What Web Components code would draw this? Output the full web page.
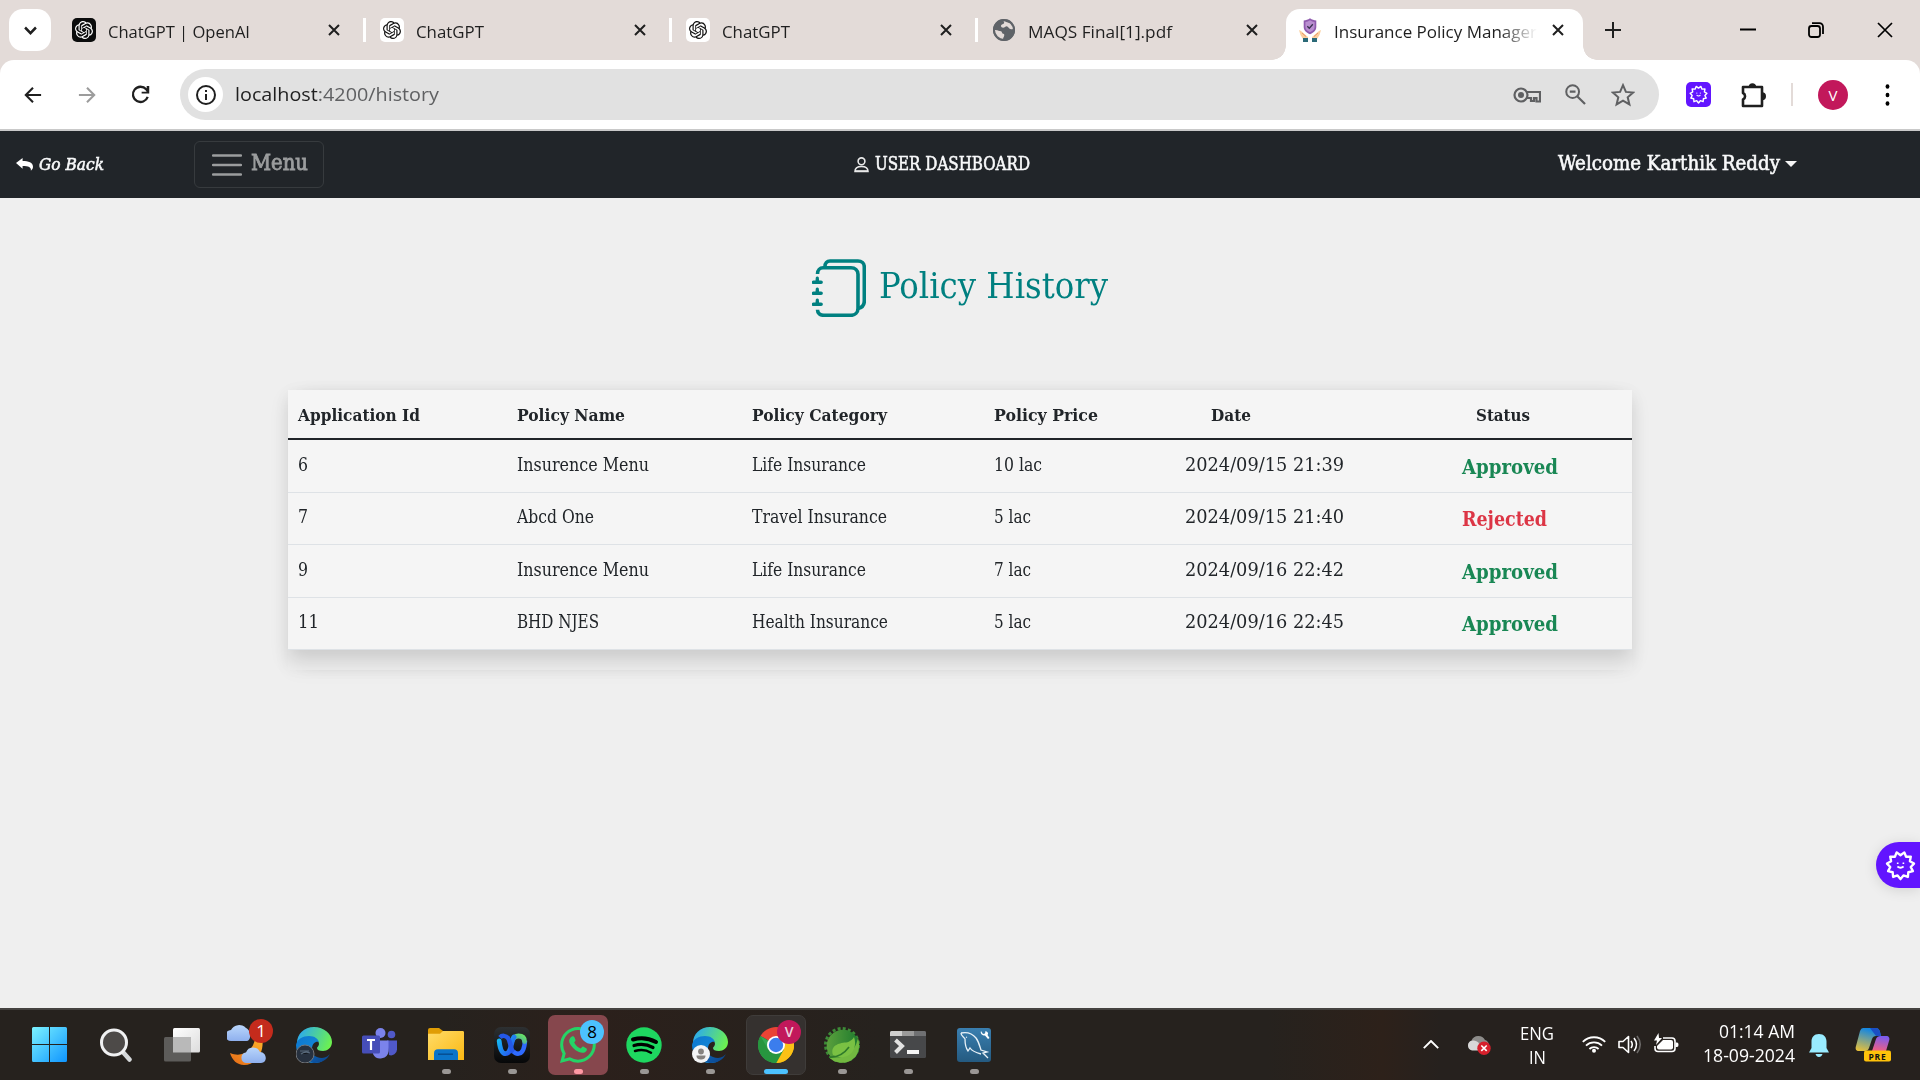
<!DOCTYPE html>
<html lang="en">
<head>
<meta charset="utf-8">
<title>Insurance Policy Management</title>
<style>
html,body{margin:0;height:100%;overflow:hidden;background:#efefef}
desktop-screen{font-family:"Open Sans","Noto Sans",sans-serif;color:#1f1f1f}
</style>
</head>
<body>
<desktop-screen></desktop-screen>
<script>
const define=(name,html,setup)=>customElements.define(name,class extends HTMLElement{
  connectedCallback(){
    if(this.shadowRoot)return;
    const root=this.attachShadow({mode:'open'});
    const t=document.createElement('template');
    t.innerHTML=typeof html==='function'?html(this):html;
    root.append(t.content.cloneNode(true));
    if(setup)setup(this,root);
  }
});

/* ---------- icons: [viewBox, markup] ---------- */
const OPENAI='M22.2819 9.8211a5.9847 5.9847 0 0 0-.5157-4.9108 6.0462 6.0462 0 0 0-6.5098-2.9A6.0651 6.0651 0 0 0 4.9807 4.1818a5.9847 5.9847 0 0 0-3.9977 2.9 6.0462 6.0462 0 0 0 .7427 7.0966 5.98 5.98 0 0 0 .511 4.9107 6.051 6.051 0 0 0 6.5146 2.9001A5.9847 5.9847 0 0 0 13.2599 24a6.0557 6.0557 0 0 0 5.7718-4.2058 5.9894 5.9894 0 0 0 3.9977-2.9001 6.0557 6.0557 0 0 0-.7475-7.0729zm-9.022 12.6081a4.4755 4.4755 0 0 1-2.8764-1.0408l.1419-.0804 4.7783-2.7582a.7948.7948 0 0 0 .3927-.6813v-6.7369l2.02 1.1686a.071.071 0 0 1 .038.052v5.5826a4.504 4.504 0 0 1-4.4945 4.4944zm-9.6607-4.1254a4.4708 4.4708 0 0 1-.5346-3.0137l.142.0852 4.783 2.7582a.7712.7712 0 0 0 .7806 0l5.8428-3.3685v2.3324a.0804.0804 0 0 1-.0332.0615L9.74 19.9502a4.4992 4.4992 0 0 1-6.1408-1.6464zM2.3408 7.8956a4.485 4.485 0 0 1 2.3655-1.9728V11.6a.7664.7664 0 0 0 .3879.6765l5.8144 3.3543-2.0201 1.1685a.0757.0757 0 0 1-.071 0l-4.8303-2.7865A4.504 4.504 0 0 1 2.3408 7.872zm16.5963 3.8558L13.1038 8.364 15.1192 7.2a.0757.0757 0 0 1 .071 0l4.8303 2.7913a4.4944 4.4944 0 0 1-.6765 8.1042v-5.6772a.79.79 0 0 0-.407-.667zm2.0107-3.0231l-.142-.0852-4.7735-2.7818a.7759.7759 0 0 0-.7854 0L9.409 9.2297V6.8974a.0662.0662 0 0 1 .0284-.0615l4.8303-2.7866a4.4992 4.4992 0 0 1 6.6802 4.66zM8.3065 12.863l-2.02-1.1638a.0804.0804 0 0 1-.038-.0567V6.0742a4.4992 4.4992 0 0 1 7.3757-3.4537l-.142.0805L8.704 5.459a.7948.7948 0 0 0-.3927.6813zm1.0976-2.3654l2.602-1.4998 2.6069 1.4998v2.9994l-2.5974 1.4997-2.6067-1.4997Z';
const line=(d,w=2,c='currentColor',x='')=>`<path d="${d}" fill="none" stroke="${c}" stroke-width="${w}" ${x}/>`;
const grad=(id,a,b,x='x1="0" y1="0" x2="1" y2="1"')=>`<linearGradient id="${id}" ${x}><stop offset="0" stop-color="${a}"/><stop offset="1" stop-color="${b}"/></linearGradient>`;
/* scalloped gear outline with a smiling face */
const gear=(()=>{let p='';const n=11;for(let i=0;i<n*2;i++){const a=Math.PI*i/n+Math.PI/2,r=i%2?10:13.2;p+=(i?'L':'M')+(15+r*Math.cos(a)).toFixed(2)+' '+(15+r*Math.sin(a)).toFixed(2);}return p+'Z';})();
const face=w=>line(gear,w,'#fff','stroke-linejoin="round"')+`<path d="M11.500 12.800h1.600M17 12.800h1.600" stroke="#fff" stroke-width="1.500"/>`+line('M12 16q3 2.400 6 0',1.700,'#fff');
const edge=`<defs>${grad('a','#2aa8f2','#6df24e','x1="0" y1=".3" x2="1" y2=".6"')}${grad('b','#0d76cf','#1592dc')}${grad('c','#0e6fc4','#0b3f86')}</defs>
<path d="M1 16C1 7 8 0 18 0c10 0 18 7 18 15 0 6-5 9-9 9-4 0-6-1-6-3 0-1 2-2 2-4 0-3-3-6-7-6-6 0-12 2-15 8z" fill="url(#a)"/>
<path d="M0 18C1 12 7 9 13 9c6 0 9 3 10 6-3-1-7 1-7 7 0 8 6 11 10 12-3 2-7 2-8 2C8 36 0 28 0 18z" fill="url(#b)"/>
<path d="M15 19c-2 7 4 12 11 12 4 0 7-3 8-4-3 6-9 9-15 9-8 0-11-9-4-17z" fill="url(#c)"/>`;
const ICONS={
 openaiDark:['0 0 24 24',`<rect width="24" height="24" rx="5" fill="#0b0c0c"/><g transform="translate(3 3) scale(.75)"><path fill="#fff" d="${OPENAI}"/></g>`],
 openai:['0 0 24 24',`<rect width="24" height="24" rx="5" fill="#fff"/><g transform="translate(3 3) scale(.75)"><path fill="#111" d="${OPENAI}"/></g>`],
 globe:['0 0 24 24',`<circle cx="12" cy="12" r="11" fill="#5f6368"/><path d="M3 12c3 0 3 1 5 1 3 0 1 3 4 3 1 2-1 3-1 6-5 0-9-5-8-10zM9 2.500c2-1 4-1 6-.500-1 2-3 1-3 3 0 1.500-3 1-3 3s3 2 4 1 2-1 3 0 2 3 5 2c1.500-.500 1-4 0-5" fill="#e3dbd8"/><circle cx="12" cy="12" r="10" fill="none" stroke="#5f6368" stroke-width="2"/>`],
 shield:['0 0 24 24',`<path d="M12 .3c2 1.500 4 2 6.300 2.200v6.500c0 3.500-3 5.800-6.300 7.200-3.300-1.400-6.300-3.700-6.300-7.200V2.500C8 2.300 10 1.800 12 .3z" fill="#8f5aae"/><path d="M12 2.300c1.500 1 3 1.500 4.600 1.700v5c0 2.600-2.200 4.200-4.600 5.300-2.400-1.100-4.600-2.700-4.600-5.300V4c1.600-.2 3.100-.7 4.600-1.700z" fill="#b98ed0"/>${line('M9.300 8.300l2 2 3.500-4',1.300,'#37324f')}<path d="M1 12l2 1 4 3.500 3 2.500V21H5L2.500 17zM23 12l-2 1-4 3.500-3 2.500v2h5l2.500-4z" fill="#fbcf9e"/><path d="M4 15l4 3.500M20 15l-4 3.500" stroke="#e9966a" stroke-width="1"/><path d="M5 20h5v4H5zM14 20h5v4h-5z" fill="#2b6a78"/>`],
 x:['0 0 12 12',line('M1 1l10 10M11 1L1 11',2)],
 winx:['0 0 16 16',line('M1 1l14 14M15 1L1 15',1.7,'#000')],
 min:['0 0 16 16',line('M0 7.500h16',2,'#000')],
 restore:['0 0 16 16',`<rect x="1" y="4" width="11" height="11" rx="2.500" fill="none" stroke="#000" stroke-width="1.800"/>`+line('M4 1.200h7.500a3.500 3.500 0 0 1 3.500 3.500V12',1.800,'#000')],
 plus:['0 0 16 16',line('M8 0v16M0 8h16',2)],
 down:['0 0 12 8',line('M1 1.300l5 5 5-5',2.300)],
 back:['0 0 20 20',line('M19 10H3M10 2l-8 8 8 8',2.300)],
 fwd:['0 0 20 20',line('M1 10h16M10 2l8 8-8 8',2.300)],
 reload:['0 0 20 20',line('M17.600 12.500A8 8 0 1 1 16 4.500l2 2.500',2.400)+'<path d="M19.200 1v8h-8V7h5.300V1z" fill="currentColor"/>'],
 info:['0 0 20 20','<circle cx="10" cy="10" r="9" fill="none" stroke="currentColor" stroke-width="2"/><path d="M9 9h2v6H9zM9 5h2v2H9z" fill="currentColor"/>'],
 key:['0 0 28 16',`<circle cx="8" cy="8" r="6.500" fill="none" stroke="currentColor" stroke-width="2.200"/><circle cx="8" cy="8" r="3" fill="currentColor"/>`+line('M13.500 5H27v9.500h-3.500V11h-2.500v3h-3v-3h-4',2.200)],
 zoomout:['0 0 22 22',`<circle cx="8" cy="8" r="6.700" fill="none" stroke="currentColor" stroke-width="2.100"/>`+line('M13 13l8 8M5 8h6',2.300)],
 star:['0 0 24 24',line('M12 2.200l2.900 6.700 7.300.6-5.500 4.800 1.700 7.100L12 17.600l-6.400 3.800 1.700-7.100L1.800 9.500l7.300-.6z',2)],
 ext:['0 0 30 30',`<rect width="30" height="30" rx="6" fill="#6215ff"/><g transform="translate(3.500 3.500) scale(.77)">${face(2.2)}</g>`],
 puzzle:['0 0 26 26','<path d="M3 5h19v19H3v-6.500a3.600 3.600 0 0 0 0-6.500z" fill="none" stroke="#1f1f1f" stroke-width="2.600" stroke-linejoin="round"/><path d="M9.500 5a3 3 0 0 1 6 0zM22 11a3.200 3.200 0 0 1 0 6.500z" fill="#1f1f1f" stroke="#1f1f1f" stroke-width="1.500"/>'],
 dots:['0 0 6 22','<circle cx="3" cy="2.500" r="2.300"/><circle cx="3" cy="11" r="2.300"/><circle cx="3" cy="19.500" r="2.300"/>'],
 reply:['0 0 16 14','<path d="M0 5.500L6.200 0v3.200c5.500 0 9.800 1.500 9.800 6.200 0 1.700-.8 3.200-2 4.200.5-3.600-2.200-5-7.800-5v2.900z" fill="#fff"/>'],
 burger:['0 0 30 22',line('M1 1.500h28M1 11h28M1 20.500h28',2.300,'#9b9d9e','stroke-linecap="round"')],
 user:['0 0 15 16','<circle cx="7.500" cy="4.300" r="3.400" fill="none" stroke="#e8e8e8" stroke-width="1.600"/><path d="M1 14.500c0-3.500 2-5 6.500-5s6.500 1.500 6.500 5z" fill="none" stroke="#e8e8e8" stroke-width="1.600"/><path d="M1 13.200h13v1.500H1z" fill="#e8e8e8"/>'],
 caret:['0 0 11 6','<path d="M0 0h11L5.500 6z" fill="#f5f5f5"/>'],
 book:['0 0 54 58',line('M13 7.500C13 4 15 2 18 2h28c3.500 0 6.300 2.500 6.300 6v34c0 4-2 6.500-6.300 7.500',3.600,'#008080')+line('M5.500 15C5.500 11 8 8.800 11 8.800h28c4 0 7 2.500 7 6.500v34c0 4-3 7-7 7H12c-4 0-6.500-2-6.500-5.500',3.600,'#008080')+'<g fill="#008080"><path id="r" d="M1.500 21.500h2l.3-3a1.700 1.700 0 0 1 3 0l.3 3h2a1.600 1.600 0 0 1 0 3.600h-7.600a1.800 1.800 0 0 1 0-3.600z"/><use href="#r" y="11"/><use href="#r" y="22"/></g>'],
 gear:['0 0 30 30',face(2.3)],
 windows:['0 0 35 35',`<defs>${grad('w','#7cf3ff','#0f95ff').replace('<linearGradient','<linearGradient gradientUnits="userSpaceOnUse"').replace('x2="1" y2="1"','x2="35" y2="35"')}</defs><path fill="url(#w)" d="M0 1.500Q0 0 1.500 0H17v17H0zM18 0h15.500Q35 0 35 1.500V17H18zM0 18h17v17H1.500Q0 35 0 33.500zM18 18h17v15.500q0 1.500-1.500 1.500H18z"/>`],
 search:['0 0 32 34','<path d="M22 23l7.500 8.500" stroke="#d5d8da" stroke-width="4.500" stroke-linecap="round"/><circle cx="14" cy="14.500" r="12.500" fill="#4d4a48" stroke="#f0f1f2" stroke-width="3"/>'],
 taskview:['0 0 36 34',`<defs>${grad('t','#fff','#dcdcdc')}</defs><rect x="9" width="27" height="24.500" rx="1.500" fill="url(#t)"/><rect y="9" width="27" height="24.500" rx="1.500" fill="#5d5c5a"/><path d="M9 9h18v15.500H9z" fill="#b9b9b9"/>`],
 weather:['0 0 42 44',`<defs>${grad('o','#ffb52b','#e56a17','x1="1" y1="0" x2="0" y2="1"')}${grad('k','#b9d6fb','#8fb0ee','x1="0" y1="0" x2="0" y2="1"')}</defs><path d="M35 14C38 28 30 42 17 42 10 42 5 37 3 30c12 5 23-2 25-14z" fill="url(#o)"/><path d="M5 20a5.500 5.500 0 0 1 0-11 9 8.500 0 0 1 15-2c5 2 6 13 0 13z" transform="translate(-1 -2)" fill="url(#k)"/><path d="M19 40a5.300 5.300 0 0 1 0-10.500 7.500 7.500 0 0 1 14-.5c7 0 8 11 1 11z" fill="url(#k)"/>`],
 edge:['0 0 36 36',edge+'<circle cx="9" cy="27" r="9" fill="#27313f" stroke="#73767b" stroke-width="1"/><path d="M4 24h9M5 27q4-3 9-1" stroke="#596a7c" stroke-width="1.200"/>'],
 edgeUser:['0 0 36 36',edge+'<circle cx="9" cy="27" r="9" fill="#f3f4f5"/><circle cx="9" cy="24.500" r="2.900" fill="#85827f"/><path d="M4.500 28.500h9c0 3-2 4-4.500 4s-4.500-1-4.500-4z" fill="#85827f"/>'],
 teams:['0 0 36 33','<circle cx="18.500" cy="5" r="5" fill="#7b83eb"/><circle cx="29.500" cy="6.500" r="3.800" fill="#5059c9"/><path d="M25 12.500h10v9a6 6 0 0 1-8 5.500z" fill="#5059c9"/><path d="M11 12.500h15.500V23a8.200 8.200 0 0 1-15.500 3z" fill="#7b83eb"/><rect y="7.500" width="18" height="18" rx="1.500" fill="#464eb8"/><path d="M5 12h8M9 12v10" stroke="#fff" stroke-width="2.200"/>'],
 files:['0 0 36 34',`<defs>${grad('f','#ffdc69','#fbb812')}</defs><path d="M0 2q0-2 2-2h9l4 3v4H0z" fill="#e09d05"/><path d="M0 6h12l3-3h19.500Q36 3 36 4.500V33H0z" fill="url(#f)"/><path d="M6 33v-7q0-4 4-4h16q4 0 4 4v7z" fill="#0b74c9"/><path d="M10 27h15" stroke="#064f94" stroke-width="1.600"/>`],
 webex:['0 0 36 36',`<defs>${grad('x','#11c6f4','#2a4cf0','gradientUnits="userSpaceOnUse" x1="3" y1="10" x2="22" y2="24"')}${grad('y','#2456f5','#65e069','gradientUnits="userSpaceOnUse" x1="20" y1="26" x2="30" y2="9"')}${grad('z','#2d3032','#060708','x1="0" y1="0" x2="0" y2="1"')}</defs><rect width="36" height="36" rx="7" fill="url(#z)"/><path d="M19 24c1.500 2 3 2.700 5 2.700 4 0 6.500-5 7-13" fill="none" stroke="#2f6bff" stroke-width="4.500"/><path d="M18 14c1.500-4 4-5 6.500-5 4 0 6 2 6 5.500" fill="none" stroke="url(#y)" stroke-width="4.800" stroke-linecap="round"/><path d="M5.200 14c.8 8 2.800 12.700 6.500 12.700C17.500 26.700 17 14 20 10" fill="none" stroke="url(#x)" stroke-width="4.800" stroke-linecap="round"/><path d="M6 10.500c2-2.500 6-2 8 .5 3 4 2 11 5.500 14" fill="none" stroke="#2458e8" stroke-width="4.500"/>`],
 whatsapp:['0 0 16 16','<path fill="#25d366" d="M13.601 2.326A7.850 7.850 0 0 0 7.994 0C3.627 0 .068 3.558.064 7.926c0 1.399.366 2.760 1.057 3.965L0 16l4.204-1.102a7.900 7.900 0 0 0 3.790.965h.004c4.368 0 7.926-3.558 7.930-7.930A7.900 7.900 0 0 0 13.600 2.326zM7.994 14.521a6.600 6.600 0 0 1-3.356-.920l-.240-.144-2.494.654.666-2.433-.156-.251a6.560 6.560 0 0 1-1.007-3.505c0-3.626 2.957-6.584 6.591-6.584a6.560 6.560 0 0 1 4.660 1.931 6.560 6.560 0 0 1 1.928 4.660c-.004 3.639-2.961 6.592-6.592 6.592"/><path fill="#25d366" d="M5.300 4.200c.5-.3.900-.1 1.100.4l.5 1.200c.1.400-.4.800-.6 1.100.7 1.300 1.600 2.100 2.900 2.700.4-.4.700-1 1.100-.9l1.500.8c.3.200.1.900-.2 1.300-.8.900-2 .8-3.200.3C6.300 10.200 4.800 8.500 4.200 7c-.4-1.200.2-2.300 1.100-2.800z"/>'],
 spotify:['0 0 36 36','<circle cx="18" cy="18" r="17.700" fill="#1ed760"/>'+line('M7 12.500q12-3.500 23 2.500',4,'#000','stroke-linecap="round"')+line('M8 18.500q10-3 19 2',3.200,'#000','stroke-linecap="round"')+line('M9 24q9-2.500 16 1.700',2.500,'#000','stroke-linecap="round"')],
 chrome:['0 0 36 36','<path d="M18 18L2.500 9A18 18 0 0 1 33.600 9z" fill="#ea4335"/><path d="M18 18L33.600 9A18 18 0 0 1 18 36z" fill="#fbbc04"/><path d="M18 18v18A18 18 0 0 1 2.500 9z" fill="#34a853"/><path d="M18 9h15.600A18 18 0 0 1 18.300 36l7.500-13.500z" fill="#fbc116"/><path d="M10.200 22.500L2.500 9A18 18 0 0 0 18.300 36l7.500-13.500z" fill="#27963f"/><circle cx="18" cy="18" r="9" fill="#fff"/><circle cx="18" cy="18" r="7.200" fill="#3b7ded"/>'],
 spring:['0 0 36 36',`<defs>${grad('s','#5aa03c','#1e7a2e','x1="0" y1="0" x2="1" y2="0"')}</defs><circle cx="18" cy="18" r="16.500" fill="none" stroke="#3d8b37" stroke-width="3" stroke-dasharray="3 2.200"/><circle cx="19" cy="19" r="16.300" fill="url(#s)"/><path d="M34 11c3 10 0 22-13 24.500C14 36.500 8 34 5 30c12 2 20-1 25-9 2-3 3-6 4-10z" fill="#72b840"/><path d="M9 28C6 19 14 16 22 15.500c4-.5 7-3.500 8-5.500 3 8 0 18-10 20-4 .8-8-.5-11-2z" fill="#7ac143"/><path d="M5 30q12 1 20-10" fill="none" stroke="#2f7a2a" stroke-width="1.600"/>`],
 terminal:['0 0 36 27','<rect width="36" height="27" rx="1.500" fill="#47484a"/><path d="M0 1.500Q0 0 1.500 0H12v5H0z" fill="#cfcfcf"/><path d="M12 0h12v5H12z" fill="#9a9a9a"/><path d="M24 0h10.500Q36 0 36 1.500V5H24z" fill="#6f7072"/><path d="M5.500 9l6.500 6-6.500 6.500" fill="none" stroke="#e2e2e2" stroke-width="4"/><path d="M17 19h12v4H17z" fill="#f5f5f5"/>'],
 mysql:['0 0 34 34',`<defs>${grad('m','#3a7fb0','#245a80','x1="0" y1="0" x2="0" y2="1"')}</defs><rect width="34" height="34" rx="3" fill="url(#m)"/>`+line('M4 5c5-1 11 0 15 5 3 4 4 9 5 12l6 2-4 1 5 5M4 5c0 3 3 4 4 6 0 4 0 8 3 12l2-3c2 3 7 5 11 6M9 9l1 .5',1.300,'#e8f1f7')+'<path d="M24 3l2 3 2-.5.500-2.500c3 1 3 3 2 4l2 3-1.500 1-3-3.500c-3 0-5-2-4-4.500z" fill="#fff"/>'],
 up:['0 0 16 9',line('M.8 8.200L8 1l7.200 7.200',1.900,'#fff')],
 cloud:['0 0 24 20','<path d="M5 15a5 5 0 0 1-.5-9.500A7.500 7.500 0 0 1 18 5c4 1 5 6 3 10z" fill="#8d8c8a"/><path d="M5 15.500a5 5 0 0 1 0-9.800c5-1 8 3 13 9.800z" fill="#d8d8d8"/><circle cx="17" cy="13.200" r="6.700" fill="#d6202c"/>'+line('M14.300 10.500l5.400 5.400M19.700 10.500l-5.400 5.400',1.600,'#fff')],
 wifi:['0 0 24 18',line('M.8 6.800a16 16 0 0 1 22.400 0M4 10.600a11.500 11.500 0 0 1 16 0M7.400 14a6.500 6.500 0 0 1 9.200 0',1.800,'#fff')+'<circle cx="12" cy="15.800" r="2" fill="#fff"/>'],
 volume:['0 0 24 19',line('M1 6.500h4l5.500-5v16L5 12.500H1z',1.600,'#fff','stroke-linejoin="round"')+line('M13 6q2.500 3.500 0 7M16 3q5 6.500 0 13',1.600,'#fff')+line('M19 1q6.500 8.500 0 17',1.600,'#6c6968')],
 battery:['0 0 25 20','<path d="M9 5h9a3 3 0 0 1 3 3v7.500a3 3 0 0 1-3 3H4a3 3 0 0 1-3-3V13" fill="none" stroke="#fff" stroke-width="1.600"/><path d="M9 7h8a2 2 0 0 1 2 2v5.500a2 2 0 0 1-2 2H5q-2 0-2-2V13z" fill="#fff"/><path d="M21.500 9.500h1.500q1.500 0 1.500 2.200T23 14h-1.500z" fill="#fff"/><path d="M4.500 0L0 7.500h3L2 12l6-7H5z" fill="#fff"/>'],
 bell:['0 0 20 23','<path d="M10 0c5 0 7.500 3.500 7.500 7.500V14l2.500 4.500H0L2.500 14V7.500C2.500 3.500 5 0 10 0zM6.500 20h7q-1 3-3.500 3t-3.500-3z" fill="#99ebff"/>'],
 copilot:['0 0 36 35',`<defs>${grad('p','#1687e0','#f2c331','x1=".3" y1="0" x2="0" y2="1"')}${grad('q','#7a5cf0','#f2607f','x1=".5" y1="0" x2=".3" y2="1"')}</defs><path d="M8 1h13q3 0 4 4l1 4h-5q-3 0-4 3l-3 9q-1 3-4 3H4c-3 0-4-2-3-5L5 4q1-3 3-3z" fill="url(#p)"/><path d="M15 1h6q3 0 4 4l1 4h-5z" fill="#1b4fc4"/><path d="M26 9h5c3 0 4 2 3 5l-3 10H17l4-12q1-3 5-3z" fill="url(#q)"/><rect x="9" y="23.500" width="27" height="11" rx="2" fill="#ffc20a"/>`]
};
define('ui-icon',el=>{const [vb,m]=ICONS[el.getAttribute('name')];const w=el.getAttribute('w'),h=el.getAttribute('h')||w;
 return `<style>:host{display:block;flex:none;width:${w}px;height:${h}px}svg{display:block}</style><svg width="${w}" height="${h}" viewBox="${vb}" preserveAspectRatio="none">${m}</svg>`;});

/* single-line text set to an exact advance width */
define('fit-text',`<style>:host{display:block;flex:none;white-space:nowrap;line-height:1.3}span{display:inline-block;transform-origin:0 50%}</style><span><slot></slot></span>`,(el,root)=>{
  const w=+el.getAttribute('w'),s=root.querySelector('span');
  el.style.width=w+'px';
  s.style.transform=`scaleX(${w/s.getBoundingClientRect().width})`;
});

define('browser-tab',el=>`<style>
:host{display:flex;align-items:center;height:44px;flex:none;box-sizing:border-box;width:306px;padding:0 0 0 14px;font-size:17px;border-right:3px solid transparent}
:host([first]){padding-left:12px}
.clip{flex:1;margin-left:12px;overflow:hidden;padding-top:4px}
ui-icon.c{margin-right:23px}
.sep{width:3px;height:24px;background:#fff;flex:none;margin-right:-3px}
:host([last]) .sep{background:none}
:host([active]){width:297px;height:51px;background:#fff;border:0;border-radius:14px 14px 0 0;padding:0 0 9px 12px;margin:9px 0 0 2px;align-self:flex-start;position:relative}
:host([active]) .sep{display:none}
:host([active]) .c{margin-right:19px}
:host([active]) .clip{-webkit-mask:linear-gradient(90deg,#000 165px,transparent 203px);flex:0 0 204px;margin-right:auto}
.l,.r{display:none;position:absolute;bottom:0;width:14px;height:14px}
:host([active]) .l{display:block;left:-14px;background:radial-gradient(circle at 0 0,transparent 13.5px,#fff 14px)}
:host([active]) .r{display:block;right:-14px;background:radial-gradient(circle at 100% 0,transparent 13.5px,#fff 14px)}
</style><i class="l"></i><i class="r"></i><ui-icon name="${el.getAttribute('icon')}" w="24"></ui-icon><div class="clip"><fit-text w="${el.getAttribute('w')}">${el.getAttribute('label')}</fit-text></div><ui-icon class="c" name="x" w="12"></ui-icon><i class="sep"></i>`);

define('tab-strip',`<style>
:host{display:flex;align-items:center;height:60px;background:#e3dbd8;box-sizing:border-box}
.drop{width:42px;height:42px;border-radius:14px;background:#fff;margin:0 9px;display:grid;place-items:center;flex:none}
.plus{margin-left:22px}.m{margin-left:119px}.r{margin-left:52px}.x{margin-left:53px}
</style><div class="drop"><ui-icon name="down" w="13" h="9"></ui-icon></div>
<browser-tab first icon="openaiDark" label="ChatGPT | OpenAI" w="142"></browser-tab>
<browser-tab icon="openai" label="ChatGPT" w="68"></browser-tab>
<browser-tab icon="openai" label="ChatGPT" w="68"></browser-tab>
<browser-tab last icon="globe" label="MAQS Final[1].pdf" w="144"></browser-tab>
<browser-tab active icon="shield" label="Insurance Policy Manager" w="203"></browser-tab>
<ui-icon class="plus" name="plus" w="16"></ui-icon><ui-icon class="m" name="min" w="16"></ui-icon><ui-icon class="r" name="restore" w="16"></ui-icon><ui-icon class="x" name="winx" w="16"></ui-icon>`);

define('browser-toolbar',`<style>
:host{display:block;background:#e3dbd8;border-bottom:2px solid #c9c9c9}
.bar{display:flex;align-items:center;height:69px;background:#fff;border-radius:14px 14px 0 0}
.addr{display:flex;align-items:center;width:1479px;height:51px;border-radius:26px;background:#e1e1e1;margin-left:30px;box-sizing:border-box;padding:0 24px 0 8px;color:#5f6062;flex:none}
.info{width:35px;height:35px;border-radius:50%;background:#fff;color:#1f1f1f;display:grid;place-items:center;margin-right:12px}
fit-text{font-size:19px;margin-right:auto}b{font-weight:400;color:#1f1f1f}
.sep{width:2px;height:23px;background:#e3dbd8;margin:0 25px}
.av{width:30px;height:30px;border-radius:50%;background:#c2185b;color:#fff;font:15px/30px "Open Sans",sans-serif;text-align:center}
</style><div class="bar"><ui-icon name="back" w="18" style="margin-left:24px"></ui-icon><ui-icon name="fwd" w="18" style="margin-left:36px;color:#9c9c9c"></ui-icon><ui-icon name="reload" w="19" style="margin-left:35px"></ui-icon>
<div class="addr"><div class="info"><ui-icon name="info" w="20"></ui-icon></div><fit-text w="204"><b>localhost</b>:4200/history</fit-text>
<ui-icon name="key" w="28" h="16"></ui-icon><ui-icon name="zoomout" w="21" style="margin:0 25px 0 24px"></ui-icon><ui-icon name="star" w="24"></ui-icon></div>
<ui-icon name="ext" w="25" style="margin:0 29px 0 27px"></ui-icon><ui-icon name="puzzle" w="26"></ui-icon><i class="sep"></i><div class="av">V</div><ui-icon name="dots" w="5" h="22" style="margin-left:37px"></ui-icon></div>`);

define('app-navbar',`<style>
:host{display:flex;align-items:center;height:67px;background:#212529;color:#f8f9fa;font-family:"DejaVu Serif Condensed","DejaVu Serif",serif;font-stretch:condensed;font-size:18.5px;-webkit-text-stroke:.55px currentColor}
.menu{display:flex;align-items:center;box-sizing:border-box;width:130px;height:47px;border:1px solid #373b3e;border-radius:6px;margin-left:90px;padding:0 0 0 17px;color:#9b9d9e;font-size:21.5px;-webkit-text-stroke:.8px currentColor}
.menu fit-text{margin:-3px 0 0 9px}
</style><ui-icon name="reply" w="17" h="13" style="margin-left:16px"></ui-icon><fit-text w="65" style="margin-left:6px;font-style:italic;font-size:17.5px">Go Back</fit-text>
<div class="menu"><ui-icon name="burger" w="30" h="22"></ui-icon><fit-text w="57">Menu</fit-text></div>
<ui-icon name="user" w="15" h="16" style="margin-left:530px"></ui-icon><fit-text w="155" style="margin-left:6px">USER DASHBOARD</fit-text>
<fit-text w="222" style="margin-left:528px;font-size:19.5px;margin-top:-2px">Welcome Karthik Reddy</fit-text><ui-icon name="caret" w="12" h="6" style="margin-left:5px;margin-top:-2px"></ui-icon>`);

define('page-heading',`<style>:host{display:flex;height:58px;margin-left:812px;color:#008080;font-family:"DejaVu Serif Condensed","DejaVu Serif",serif;font-stretch:condensed;font-size:35.5px}fit-text{margin:4px 0 0 13px}</style>
<ui-icon name="book" w="54" h="58"></ui-icon><fit-text w="229"><slot></slot></fit-text>`);

const rows=[
 ['6',10,'Insurence Menu',132,'Life Insurance',114,'10 lac',48,'2024/09/15 21:39','Approved',53,2],
 ['7',10,'Abcd One',77,'Travel Insurance',135,'5 lac',37,'2024/09/15 21:40','Rejected',52,3],
 ['9',10,'Insurence Menu',132,'Life Insurance',114,'7 lac',37,'2024/09/16 22:42','Approved',53,2],
 ['11',21,'BHD NJES',82,'Health Insurance',136,'5 lac',37,'2024/09/16 22:45','Approved',52,3]];
define('policy-table',`<style>
:host{display:block;width:1344px;height:280px;overflow:visible;box-shadow:-8px 0 18px -9px rgba(0,0,0,.13),8px 0 18px -9px rgba(0,0,0,.13),0 2px 18px rgba(0,0,0,.035);font-family:"DejaVu Serif Condensed","DejaVu Serif",serif;font-stretch:condensed;font-size:18px;color:#212529}
.clip{overflow:hidden;height:280px}
.t{background:#f5f5f5;box-shadow:0 10px 20px rgba(0,0,0,.16)}
.row{display:grid;grid-template-columns:219px 235px 242px 191px 277px 1fr;padding-left:10px;box-sizing:border-box;align-items:center;border-bottom:1px solid #dee2e6}
.head{height:50px;border-bottom:2px solid #212529;padding-top:2px;font-weight:700;font-size:17.5px}
.s{font-weight:700;font-size:21px;margin-top:3px;color:#198754}.Rejected{color:#dc3545}
</style><div class="clip"><div class="t"><div class="row head"><fit-text w="122">Application Id</fit-text><fit-text w="108">Policy Name</fit-text><fit-text w="135">Policy Category</fit-text><fit-text w="104">Policy Price</fit-text><fit-text w="40" style="margin-left:26px">Date</fit-text><fit-text w="54" style="margin-left:14px">Status</fit-text></div>
${rows.map(r=>`<div class="row" style="height:${r[10]}px;padding-bottom:${r[11]}px"><fit-text w="${r[1]}">${r[0]}</fit-text><fit-text w="${r[3]}">${r[2]}</fit-text><fit-text w="${r[5]}">${r[4]}</fit-text><fit-text w="${r[7]}">${r[6]}</fit-text><fit-text w="159">${r[8]}</fit-text><fit-text class="s ${r[9]}" w="${r[9]==='Approved'?96:85}">${r[9]}</fit-text></div>`).join('')}</div></div>`);

define('chat-launcher',`<style>:host{position:absolute;right:0;top:711px;width:44px;height:46px;border-radius:23px 0 0 23px;background:#6215ff;box-shadow:0 2px 14px rgba(0,0,0,.12);display:flex;align-items:center;box-sizing:border-box;padding-left:9px}</style><ui-icon name="gear" w="31"></ui-icon>`);

define('task-item',el=>`<style>
:host{display:grid;place-items:center;position:relative;width:60px;height:60px;margin:-1px 3px 0;box-sizing:border-box;border-radius:7px;flex:none}
:host([hot]){background:#86474d}:host([current]){background:#35312f;border:1px solid #3f3c3a}
:host([run])::after{content:"";position:absolute;bottom:1px;left:50%;width:9px;height:5px;margin-left:-4.5px;border-radius:3px;background:#9a9795}
:host([hot])::after{background:#ff99a4}
:host([current])::after{width:24px;margin-left:-12px;background:#4cc2ff;bottom:0}
.b{position:absolute;border-radius:50%;width:24px;height:24px;text-align:center;font-size:17px;line-height:24px;left:32px;top:5px}
</style><ui-icon name="${el.getAttribute('icon')}" w="${el.getAttribute('w')||36}" h="${el.getAttribute('h')||el.getAttribute('w')||36}"></ui-icon>${el.hasAttribute('badge')?`<span class="b" style="${el.getAttribute('look')}">${el.getAttribute('badge')}</span>`:''}`);

define('task-bar',`<style>
:host{display:flex;align-items:center;height:72px;box-sizing:border-box;border-top:2px solid #454240;background:linear-gradient(90deg,#26221e 0 23%,#2b201b 31%,#26221e 46% 66%,#2d211a 72%,#26211e 75%);color:#fff;font-size:18px;padding-left:17px}
.lang{display:flex;flex-direction:column;align-items:center;margin:0 28px 0 29px}
.time{display:flex;flex-direction:column;align-items:flex-end;width:92px;margin:-4px 14px 0 24px}
fit-text{line-height:24px}
.cp{position:relative;margin:-1px 0 0 26px}.cp span{position:absolute;left:9px;top:24px;width:27px;font:700 8.5px/11px "Open Sans",sans-serif;color:#111;text-align:center;letter-spacing:.8px}
</style>
<task-item icon="windows" w="35" style="margin:-1px 4px 0 2px"></task-item><task-item icon="search" w="32" h="34"></task-item><task-item icon="taskview" h="34"></task-item>
<task-item icon="weather" w="42" h="44" badge="1" look="background:#c42b1c;left:31px;top:4px"></task-item><task-item icon="edge"></task-item><task-item icon="teams" h="33"></task-item>
<task-item icon="files" h="33" run></task-item><task-item icon="webex" run></task-item><task-item icon="whatsapp" run hot badge="8" look="background:#4cc2ff;color:#000"></task-item>
<task-item icon="spotify" run></task-item><task-item icon="edgeUser" run></task-item><task-item icon="chrome" run current badge="V" look="background:#c2185b;color:#ecd2dc;font-weight:600;font-size:14px;left:30px;top:4px"></task-item>
<task-item icon="spring" run></task-item><task-item icon="terminal" h="27" run></task-item><task-item icon="mysql" w="34" run></task-item>
<ui-icon name="up" w="16" h="9" style="margin:-2px 0 0 auto"></ui-icon><ui-icon name="cloud" w="24" h="20" style="margin-left:28px"></ui-icon>
<div class="lang"><fit-text w="34">ENG</fit-text><fit-text w="17">IN</fit-text></div>
<ui-icon name="wifi" w="24" h="18" style="margin-top:-2px"></ui-icon><ui-icon name="volume" w="24" h="19" style="margin:-2px 12px 0"></ui-icon><ui-icon name="battery" w="25" h="20" style="margin-top:-5px"></ui-icon>
<div class="time"><fit-text w="76">01:14 AM</fit-text><fit-text w="92">18-09-2024</fit-text></div>
<ui-icon name="bell" w="20" h="23"></ui-icon><div class="cp"><ui-icon name="copilot" w="36" h="35"></ui-icon><span>PRE</span></div><i style="width:29px"></i>`);

define('desktop-screen',`<style>
:host{display:flex;flex-direction:column;width:1920px;height:1080px;background:#efefef}
main{flex:1;position:relative;display:flex;flex-direction:column;overflow:hidden}
page-heading{margin-top:61px}policy-table{margin:73px auto 0}
chat-launcher{top:644px}
</style><tab-strip></tab-strip><browser-toolbar></browser-toolbar><app-navbar></app-navbar>
<main><page-heading>Policy History</page-heading><policy-table></policy-table><chat-launcher></chat-launcher></main><task-bar></task-bar>`);
</script>
</body>
</html>
